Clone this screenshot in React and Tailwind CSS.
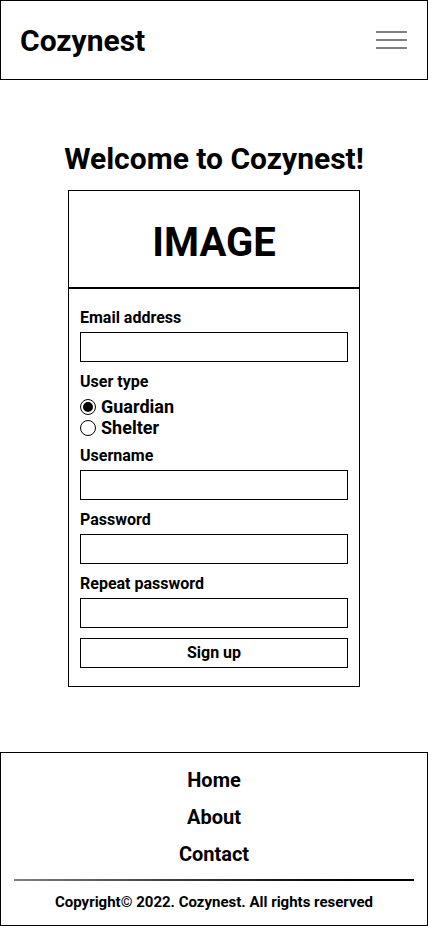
import React, { useState } from "react";

const Field = ({ label, type = "text", className = "mt-[10px]" }) => (
  <div className={className}>
    <label className="block h-[20px] text-[16px] font-bold leading-[20px]">{label}</label>
    <input
      type={type}
      className="mt-[4px] block h-[30px] w-full border border-black bg-white outline-none"
    />
  </div>
);

const Radio = ({ label, checked, onClick }) => (
  <button type="button" onClick={onClick} className="flex h-[21px] items-center">
    <span className="flex h-[16px] w-[16px] items-center justify-center rounded-full border border-black">
      {checked && <span className="h-[10px] w-[10px] rounded-full bg-black" />}
    </span>
    <span className="ml-[5px] text-[18px] font-bold leading-[21px]">{label}</span>
  </button>
);

const App = () => {
  const [userType, setUserType] = useState("guardian");

  return (
    <div className="min-h-screen bg-white text-black" style={{ fontFamily: "Roboto, 'Liberation Sans', sans-serif" }}>
      {/* header */}
      <header className="flex h-20 items-center justify-between border border-black pl-[19px] pr-[20px]">
        <h1 className="text-[30px] font-bold">Cozynest</h1>
        <div className="flex w-[31px] flex-col gap-[6px]">
          <span className="h-[2px] bg-[#808080]" />
          <span className="h-[2px] bg-[#808080]" />
          <span className="h-[2px] bg-[#808080]" />
        </div>
      </header>

      <main className="flex flex-col items-center">
        <h2 className="mt-[61px] h-[35px] text-[30px] font-bold leading-[35px]">Welcome to Cozynest!</h2>
        <div className="mt-[14px] w-[292px] border border-black">
          <div className="flex h-[98px] items-center justify-center border-b-2 border-black pt-[7px]">
            <span className="text-[40px] font-bold">IMAGE</span>
          </div>
          <form className="px-[11px] pb-[18px] pt-[9px]" onSubmit={(e) => e.preventDefault()}>
            <Field label="Email address" type="email" />
            <div className="mt-[10px]">
              <p className="h-[20px] text-[16px] font-bold leading-[20px]">User type</p>
              <div className="mt-[4px] flex flex-col">
                <Radio label="Guardian" checked={userType === "guardian"} onClick={() => setUserType("guardian")} />
                <Radio label="Shelter" checked={userType === "shelter"} onClick={() => setUserType("shelter")} />
              </div>
            </div>
            <Field label="Username" className="mt-[8px]" />
            <Field label="Password" type="password" />
            <Field label="Repeat password" type="password" />
            <button
              type="submit"
              className="mt-[10px] block h-[30px] w-full border border-black bg-white text-[16px] font-bold"
            >
              Sign up
            </button>
          </form>
        </div>
      </main>

      {/* footer */}
      <footer className="mt-[65px] border border-black pb-[14px] pt-[9px]">
        <nav className="flex flex-col items-center text-[20px] font-bold leading-[37px]">
          <a href="#">Home</a>
          <a href="#">About</a>
          <a href="#">Contact</a>
        </nav>
        <div className="mx-[13px] mt-[6px] h-[2px] bg-gradient-to-r from-[#808080] to-black" />
        <p className="mt-[12px] text-center text-[15px] font-bold leading-[18px]">
          Copyright© 2022. Cozynest. All rights reserved
        </p>
      </footer>
    </div>
  );
};

export default App;
